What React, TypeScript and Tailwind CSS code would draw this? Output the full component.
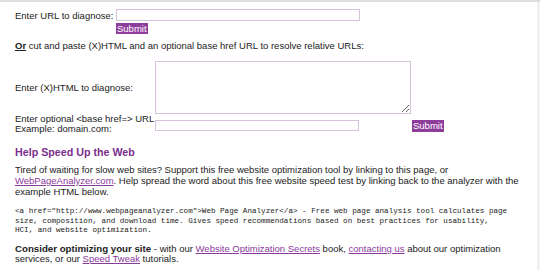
export default function App() {
  return (
    <div className="w-[540px] h-[270px] overflow-hidden bg-white border-t-2 border-[#dedede] font-['Liberation_Sans',Arial,sans-serif] text-[9.5px] text-[#222]">
      <div className="h-full border-r-[3px] border-[#f1f1f1] pl-[15px]">
        {/* URL form */}
        <div className="flex items-start pt-[7px]">
          <label className="w-[101px] leading-[12px] pt-[1px]">Enter URL to diagnose:</label>
          <div className="flex flex-col items-start">
            <input type="text" className="w-[244px] h-[12px] border border-[#d7c2db] outline-none" />
            <button className="mt-[2px] h-[11px] px-[1px] bg-[#8e3d9b] text-white leading-[11px] text-[9.5px]">
              Submit
            </button>
          </div>
        </div>

        <p className="mt-[6px] leading-[11px]">
          <b className="underline">Or</b> cut and paste (X)HTML and an optional base href URL to resolve relative URLs:
        </p>

        {/* HTML form */}
        <div className="flex items-center mt-[10px]">
          <label className="w-[140px] leading-[11px]">Enter (X)HTML to diagnose:</label>
          <textarea className="w-[256px] h-[53px] border border-[#d7c2db] outline-none" />
        </div>
        <div className="flex items-start">
          <label className="w-[140px] leading-[10px]">
            Enter optional &lt;base href=&gt; URL
            <br />
            Example: domain.com:
          </label>
          <input type="text" className="mt-[6px] w-[204px] h-[11px] border border-[#d7c2db] outline-none" />
          <button className="ml-[53px] mt-[6px] h-[12px] px-[1px] bg-[#8e3d9b] text-white leading-[12px] text-[9.5px]">
            Submit
          </button>
        </div>

        {/* Help section */}
        <h2 className="mt-[12px] text-[10.7px] font-bold leading-[13px] text-[#7b2d8e]">Help Speed Up the Web</h2>
        <p className="mt-[6px] w-[520px] leading-[10.8px]">
          Tired of waiting for slow web sites? Support this free website optimization tool by linking to this page, or
          <br />
          <a className="text-[#8a3a9a] underline">WebPageAnalyzer.com</a>. Help spread the word about this free website speed test by linking back to the analyzer with the
          <br />
          example HTML below.
        </p>

        <pre className="mt-[10px] font-['Liberation_Mono','Courier_New',monospace] text-[7.6px] leading-[9.2px] text-[#222]">
          {'<a href="http://www.webpageanalyzer.com">Web Page Analyzer</a> - Free web page analysis tool calculates page\nsize, composition, and download time. Gives speed recommendations based on best practices for usability,\nHCI, and website optimization.'}
        </pre>

        <p className="mt-[9px] leading-[9.5px]">
          <b className="text-[9.7px]">Consider optimizing your site</b> - with our{" "}
          <a className="text-[#8a3a9a] underline">Website Optimization Secrets</a> book,{" "}
          <a className="text-[#8a3a9a] underline">contacting us</a> about our optimization
          <br />
          services, or our <a className="text-[#8a3a9a] underline">Speed Tweak</a> tutorials.
        </p>
      </div>
    </div>
  );
}
